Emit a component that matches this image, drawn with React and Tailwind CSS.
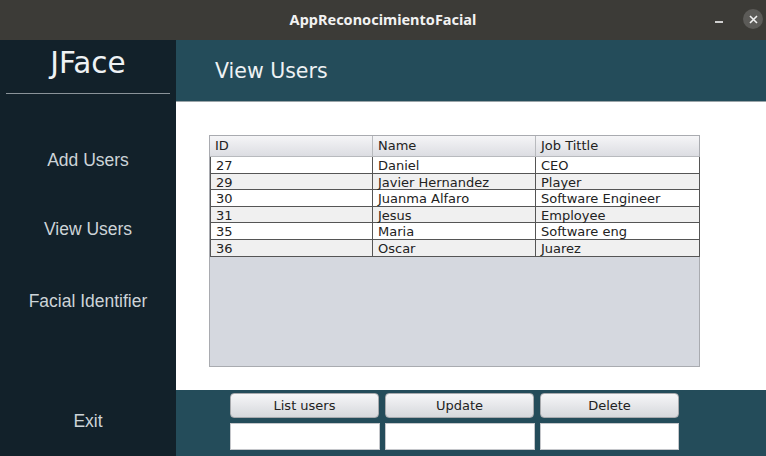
const users = [
  { id: "27", name: "Daniel", job: "CEO" },
  { id: "29", name: "Javier Hernandez", job: "Player" },
  { id: "30", name: "Juanma Alfaro", job: "Software Engineer" },
  { id: "31", name: "Jesus", job: "Employee" },
  { id: "35", name: "Maria", job: "Software eng" },
  { id: "36", name: "Oscar", job: "Juarez" },
];

const dejavu = "font-['DejaVu_Sans',sans-serif]";

function NavItem({ label, className }) {
  return (
    <div
      className={`h-[50px] flex items-center justify-center text-[17.5px] text-[#cdd4d8] font-['Liberation_Sans',Arial,sans-serif] ${className}`}
    >
      {label}
    </div>
  );
}

function Button({ children, className }) {
  return (
    <button
      className={`h-[25px] rounded-[4px] border border-[#a7a9ad] bg-gradient-to-b from-[#f6f6f8] to-[#d6d8dc] text-[13px] text-[#222] ${dejavu} ${className}`}
    >
      {children}
    </button>
  );
}

export default function App() {
  return (
    <div className="w-[766px] h-[456px] flex flex-col overflow-hidden bg-[#3c3b37]">
      {/* Title bar */}
      <div className="h-[40px] relative flex items-center justify-center bg-[#3c3b37]">
        <span className="text-[14.5px] font-bold text-[#f2f2f2] font-['Noto_Sans',sans-serif]">
          AppReconocimientoFacial
        </span>
        <div className="absolute left-[715px] top-[21px] w-[8px] h-[1.5px] bg-[#cfcfcf]" />
        <div className="absolute left-[743px] top-[9px] w-[20px] h-[20px] rounded-full bg-[#5c5b58] flex items-center justify-center">
          <svg width="9" height="9" viewBox="0 0 9 9">
            <path d="M1 1L8 8M8 1L1 8" stroke="#f0f0f0" strokeWidth="1.6" />
          </svg>
        </div>
      </div>

      <div className="flex h-[416px]">
        {/* Sidebar */}
        <div className="w-[176px] bg-[#12212a] flex flex-col">
          <div className="h-[47px] flex items-center justify-center text-[29.5px] text-[#eef2f4] font-['DejaVu_Sans',sans-serif]">
            JFace
          </div>
          <div className="mt-[6px] mx-[6px] h-px bg-[#8a9399]" />
          <NavItem label="Add Users" className="mt-[41px]" />
          <NavItem label="View Users" className="mt-[19px]" />
          <NavItem label="Facial Identifier" className="mt-[22px]" />
          <NavItem label="Exit" className="mt-[70px]" />
        </div>

        {/* Main panel */}
        <div className="flex-1 flex flex-col">
          <div className="h-[62px] bg-[#244c5a] border-b border-[#9aa4a8] flex items-center pl-[39px] pt-[2px]">
            <span className={`text-[20.5px] text-[#eef2f4] ${dejavu}`}>View Users</span>
          </div>

          <div className="h-[288px] bg-white pt-[33px] pl-[33px]">
            <div className="w-[491px] h-[232px] border border-[#a9abb0] bg-[#d5d8df] flex flex-col">
              <div className="h-[21px] flex bg-gradient-to-b from-[#f5f5f7] to-[#dcdde2] border-b border-[#b8babe]">
                {["ID", "Name", "Job Tittle"].map((h, i) => (
                  <div
                    key={h}
                    className={`${i === 2 ? "flex-1" : "w-[163px] border-r border-[#b8babe]"} pl-[5px] flex items-center text-[13px] text-[#222] ${dejavu}`}
                  >
                    {h}
                  </div>
                ))}
              </div>
              <div className="border-x border-[#555] w-[490px]">
                {users.map((u, i) => (
                  <div
                    key={u.id}
                    className={`h-[16.6px] flex border-b border-[#555] ${i % 2 ? "bg-[#f0f0f0]" : "bg-white"} text-[13px] leading-[18px] text-[#222] ${dejavu}`}
                  >
                    <div className="w-[162px] border-r border-[#555] pl-[5px]">{u.id}</div>
                    <div className="w-[163px] border-r border-[#555] pl-[5px]">{u.name}</div>
                    <div className="flex-1 pl-[5px]">{u.job}</div>
                  </div>
                ))}
              </div>
            </div>
          </div>

          <div className="flex-1 bg-[#244c5a] pl-[54px] pt-[3px] flex flex-col gap-[5px]">
            <div className="flex gap-[6px]">
              <Button className="w-[149px]">List users</Button>
              <Button className="w-[149px]">Update</Button>
              <Button className="w-[139px]">Delete</Button>
            </div>
            <div className="flex gap-[5px]">
              <div className="w-[150px] h-[27px] bg-white border border-[#c4c6ca]" />
              <div className="w-[150px] h-[27px] bg-white border border-[#c4c6ca]" />
              <div className="w-[139px] h-[27px] bg-white border border-[#c4c6ca]" />
            </div>
          </div>
        </div>
      </div>
    </div>
  );
}
